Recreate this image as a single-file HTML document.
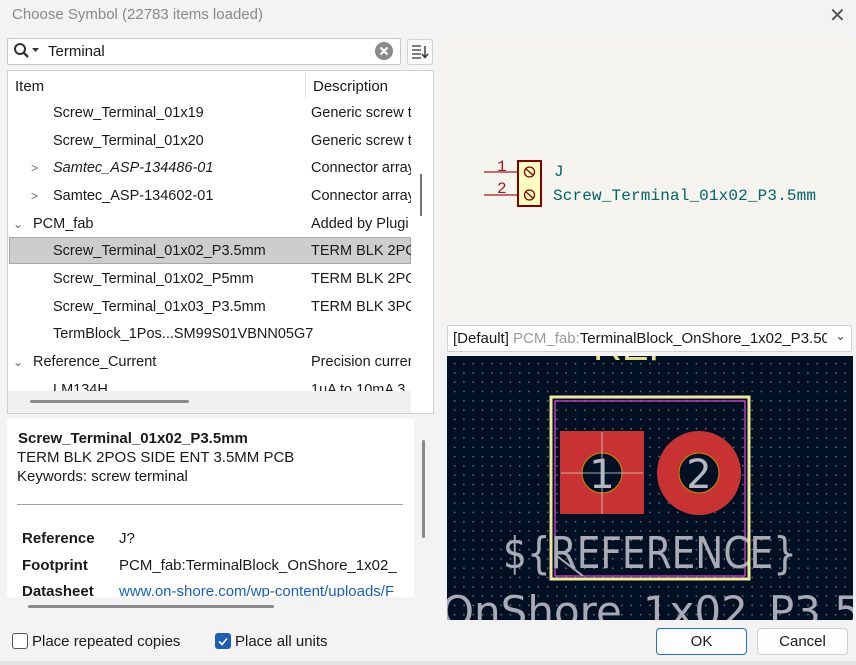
<!DOCTYPE html>
<html><head><meta charset="utf-8"><style>
*{margin:0;padding:0;box-sizing:border-box}
body{width:856px;height:665px;background:#f3f3f3;font-family:"Liberation Sans",sans-serif;font-size:14px;color:#1a1a1a;position:relative;overflow:hidden}
.a{position:absolute;white-space:nowrap}
.row{position:absolute;left:9px;width:402px;height:27px;line-height:27px}
.row .n{position:absolute;left:44px}
.row .d{position:absolute;left:302px;width:100px;overflow:hidden}
.chev{position:absolute;left:22px;color:#666;font-size:12px}
</style></head><body>
<div class="a" style="left:12px;top:6px;color:#8a8a8a;font-size:15px">Choose Symbol (22783 items loaded)</div>
<div class="a" style="left:829px;top:3px;font-size:20px;color:#555">✕</div>
<div class="a" style="left:7px;top:38px;width:394px;height:27px;background:#fff;border:1px solid #c8c8c8;border-radius:2px"></div>
<svg class="a" style="left:13px;top:42px" width="30" height="18"><circle cx="7" cy="7" r="5" fill="none" stroke="#333" stroke-width="2"/><line x1="10.5" y1="10.5" x2="15" y2="15" stroke="#333" stroke-width="2.4"/><path d="M19 6h7l-3.5 4z" fill="#333"/></svg>
<div class="a" style="left:48px;top:43px;font-size:15px">Terminal</div>
<svg class="a" style="left:374px;top:41px" width="20" height="20"><circle cx="10" cy="10" r="9" fill="#8a8a8a"/><path d="M6.5 6.5l7 7M13.5 6.5l-7 7" stroke="#fff" stroke-width="2.2"/></svg>
<div class="a" style="left:407px;top:39px;width:26px;height:26px;background:#fbfbfb;border:1px solid #d0d0d0;border-radius:3px"></div>
<svg class="a" style="left:410px;top:43px" width="20" height="18"><path d="M2 3h9M2 7h9M2 11h9M2 15h9" stroke="#333" stroke-width="1.3"/><path d="M15 3v11M12 11l3 3.5 3-3.5" stroke="#333" stroke-width="1.4" fill="none"/></svg>
<div class="a" style="left:7px;top:70px;width:427px;height:344px;background:#fff;border:1px solid #d0d0d0"></div>
<div class="a" style="left:15px;top:78px;font-size:15px">Item</div>
<div class="a" style="left:305px;top:72px;width:1px;height:26px;background:#e2e2e2"></div>
<div class="a" style="left:313px;top:78px;font-size:15px">Description</div>
<div class="a" style="left:9px;top:99px;width:402px;height:292px;overflow:hidden">
<div style="position:relative;left:-9px;top:-99px;font-size:14.5px">
<div class="row" style="top:100px"><span class="n">Screw_Terminal_01x19</span><span class="d">Generic screw t</span></div>
<div class="row" style="top:128px"><span class="n">Screw_Terminal_01x20</span><span class="d">Generic screw t</span></div>
<div class="row" style="top:155px"><span class="chev">&gt;</span><span class="n" style="font-style:italic">Samtec_ASP-134486-01</span><span class="d">Connector array</span></div>
<div class="row" style="top:183px"><span class="chev">&gt;</span><span class="n">Samtec_ASP-134602-01</span><span class="d">Connector array</span></div>
<div class="row" style="top:211px"><span class="chev" style="left:4px">⌄</span><span class="n" style="left:24px">PCM_fab</span><span class="d">Added by Plugi</span></div>
<div class="row" style="top:237px;background:#cdcdcd;border:1px solid #a8a8a8;line-height:26px"><span class="n" style="left:43px">Screw_Terminal_01x02_P3.5mm</span><span class="d" style="left:301px">TERM BLK 2POS</span></div>
<div class="row" style="top:266px"><span class="n">Screw_Terminal_01x02_P5mm</span><span class="d">TERM BLK 2POS</span></div>
<div class="row" style="top:294px"><span class="n">Screw_Terminal_01x03_P3.5mm</span><span class="d">TERM BLK 3POS</span></div>
<div class="row" style="top:321px"><span class="n">TermBlock_1Pos...SM99S01VBNN05G7</span></div>
<div class="row" style="top:349px"><span class="chev" style="left:4px">⌄</span><span class="n" style="left:24px">Reference_Current</span><span class="d">Precision currer</span></div>
<div class="row" style="top:377px"><span class="n">LM134H</span><span class="d">1uA to 10mA 3</span></div>
</div></div>
<div class="a" style="left:8px;top:391px;width:403px;height:22px;background:#f0f0f0"></div>
<div class="a" style="left:30px;top:400px;width:159px;height:3px;background:#8a8a8a;border-radius:2px"></div>
<div class="a" style="left:420px;top:174px;width:2px;height:42px;background:#777"></div>
<div class="a" style="left:7px;top:419px;width:407px;height:178px;background:#fff"></div>
<div class="a" style="left:18px;top:430px;font-weight:bold;font-size:15px">Screw_Terminal_01x02_P3.5mm</div>
<div class="a" style="left:17px;top:449px;font-size:15px">TERM BLK 2POS SIDE ENT 3.5MM PCB</div>
<div class="a" style="left:17px;top:468px;font-size:15px">Keywords: screw terminal</div>
<div class="a" style="left:17px;top:504px;width:386px;height:1px;background:#a0a0a0"></div>
<div class="a" style="left:22px;top:530px;font-weight:bold;font-size:15px">Reference</div>
<div class="a" style="left:119px;top:530px;font-size:15px">J?</div>
<div class="a" style="left:22px;top:557px;font-weight:bold;font-size:15px">Footprint</div>
<div class="a" style="left:119px;top:557px;font-size:15px;width:295px;overflow:hidden">PCM_fab:TerminalBlock_OnShore_1x02_</div>
<div class="a" style="left:7px;top:583px;width:407px;height:14px;overflow:hidden"><div style="position:absolute;top:0px;left:15px;font-weight:bold;font-size:15px">Datasheet</div><div style="position:absolute;top:0px;left:112px;font-size:15px;color:#1b5fbf">www.on-shore.com/wp-content/uploads/F</div></div>
<div class="a" style="left:28px;top:605px;width:246px;height:3px;background:#8a8a8a;border-radius:2px"></div>
<div class="a" style="left:422px;top:440px;width:3px;height:98px;background:#8a8a8a;border-radius:2px"></div>
<div class="a" style="left:12px;top:633px;width:16px;height:16px;border:1px solid #555;border-radius:3px;background:#fff"></div>
<div class="a" style="left:32px;top:633px;font-size:15px">Place repeated copies</div>
<div class="a" style="left:215px;top:633px;width:16px;height:16px;border-radius:3px;background:#1e5fb4"></div>
<svg class="a" style="left:215px;top:633px" width="16" height="16"><path d="M4 8.5l3 3 5-6" stroke="#fff" stroke-width="1.6" fill="none"/></svg>
<div class="a" style="left:235px;top:633px;font-size:15px">Place all units</div>
<div class="a" style="left:441px;top:37px;width:415px;height:283px;background:#f5f4ef"></div>
<svg class="a" style="left:470px;top:145px" width="360" height="70">
<line x1="14" y1="27" x2="47" y2="27" stroke="#a01a1a" stroke-width="1.3"/>
<line x1="14" y1="50" x2="47" y2="50" stroke="#a01a1a" stroke-width="1.3"/>
<text x="27" y="26" font-family="Liberation Mono" font-size="16" fill="#a01a1a">1</text>
<text x="27" y="48" font-family="Liberation Mono" font-size="16" fill="#a01a1a">2</text>
<rect x="48" y="16" width="23" height="45" fill="#ffffc2" stroke="#840000" stroke-width="2"/>
<circle cx="59.5" cy="27" r="5" fill="none" stroke="#840000" stroke-width="1.3"/><line x1="56" y1="24" x2="63" y2="30" stroke="#840000" stroke-width="1.3"/>
<circle cx="59.5" cy="50" r="5" fill="none" stroke="#840000" stroke-width="1.3"/><line x1="56" y1="47" x2="63" y2="53" stroke="#840000" stroke-width="1.3"/>
<text x="84" y="31" font-family="Liberation Mono" font-size="16" fill="#006464">J</text>
<text x="83" y="55" font-family="Liberation Mono" font-size="16" textLength="263" lengthAdjust="spacing" fill="#006464">Screw_Terminal_01x02_P3.5mm</text>
</svg>
<div class="a" style="left:447px;top:325px;width:405px;height:27px;background:#fff;border:1px solid #d0d0d0;border-radius:2px"></div>
<div class="a" style="left:453px;top:330px;font-size:15px;width:374px;overflow:hidden">[Default] <span style="color:#9a9a9a">PCM_fab:</span>TerminalBlock_OnShore_1x02_P3.50mm</div>
<div class="a" style="left:835px;top:328px;font-size:13px;color:#555">⌄</div>
<div class="a" style="left:447px;top:356px;width:406px;height:264px;background:#001023;background-image:radial-gradient(circle,#6a7080 0.7px,transparent 1px);background-size:9.3px 9.3px;background-position:3px 3px;overflow:hidden">
<svg width="406" height="264" style="position:absolute;left:0;top:0">
<text x="146" y="4" font-family="Liberation Sans" font-size="40" fill="#e8e08a">REF</text>
<rect x="104" y="41" width="198" height="182" fill="none" stroke="#f0e89a" stroke-width="3"/>
<rect x="108" y="45" width="190" height="175" fill="none" stroke="#e040e0" stroke-width="1.3"/>
<rect x="113" y="75" width="84" height="83" fill="#c83232"/>
<circle cx="252" cy="117" r="42" fill="#c83232"/>
<circle cx="155" cy="117" r="20" fill="#001023" stroke="#c89000" stroke-width="1"/>
<circle cx="252" cy="117" r="20" fill="#001023" stroke="#c89000" stroke-width="1"/>
<line x1="155" y1="76" x2="155" y2="158" stroke="#d8d8d8" stroke-width="0.8"/>
<line x1="114" y1="117" x2="196" y2="117" stroke="#d8d8d8" stroke-width="0.8"/>
<text x="155" y="132" text-anchor="middle" font-family="DejaVu Sans" font-size="40" fill="#b4b8c4">1</text>
<text x="252" y="132" text-anchor="middle" font-family="DejaVu Sans" font-size="40" fill="#b4b8c4">2</text>
<text x="203" y="212" text-anchor="middle" font-family="DejaVu Sans" font-size="44" textLength="294" lengthAdjust="spacingAndGlyphs" fill="#a8abb5">${REFERENCE}</text>
<line x1="110" y1="200" x2="136" y2="220" stroke="#a8abb5" stroke-width="2"/>
<text x="-6" y="270" font-family="DejaVu Sans" font-size="42" fill="#a8abb5">OnShore_1x02_P3.50</text>
</svg></div>
<div class="a" style="left:656px;top:628px;width:91px;height:27px;background:#fdfdfd;border:1px solid #1e6fc8;border-radius:4px;text-align:center;line-height:25px;font-size:15px">OK</div>
<div class="a" style="left:757px;top:628px;width:91px;height:27px;background:#fdfdfd;border:1px solid #d0d0d0;border-radius:4px;text-align:center;line-height:25px;font-size:15px">Cancel</div>
<div class="a" style="left:0;top:661px;width:856px;height:4px;background:#e4e4e4"></div>
</body></html>
